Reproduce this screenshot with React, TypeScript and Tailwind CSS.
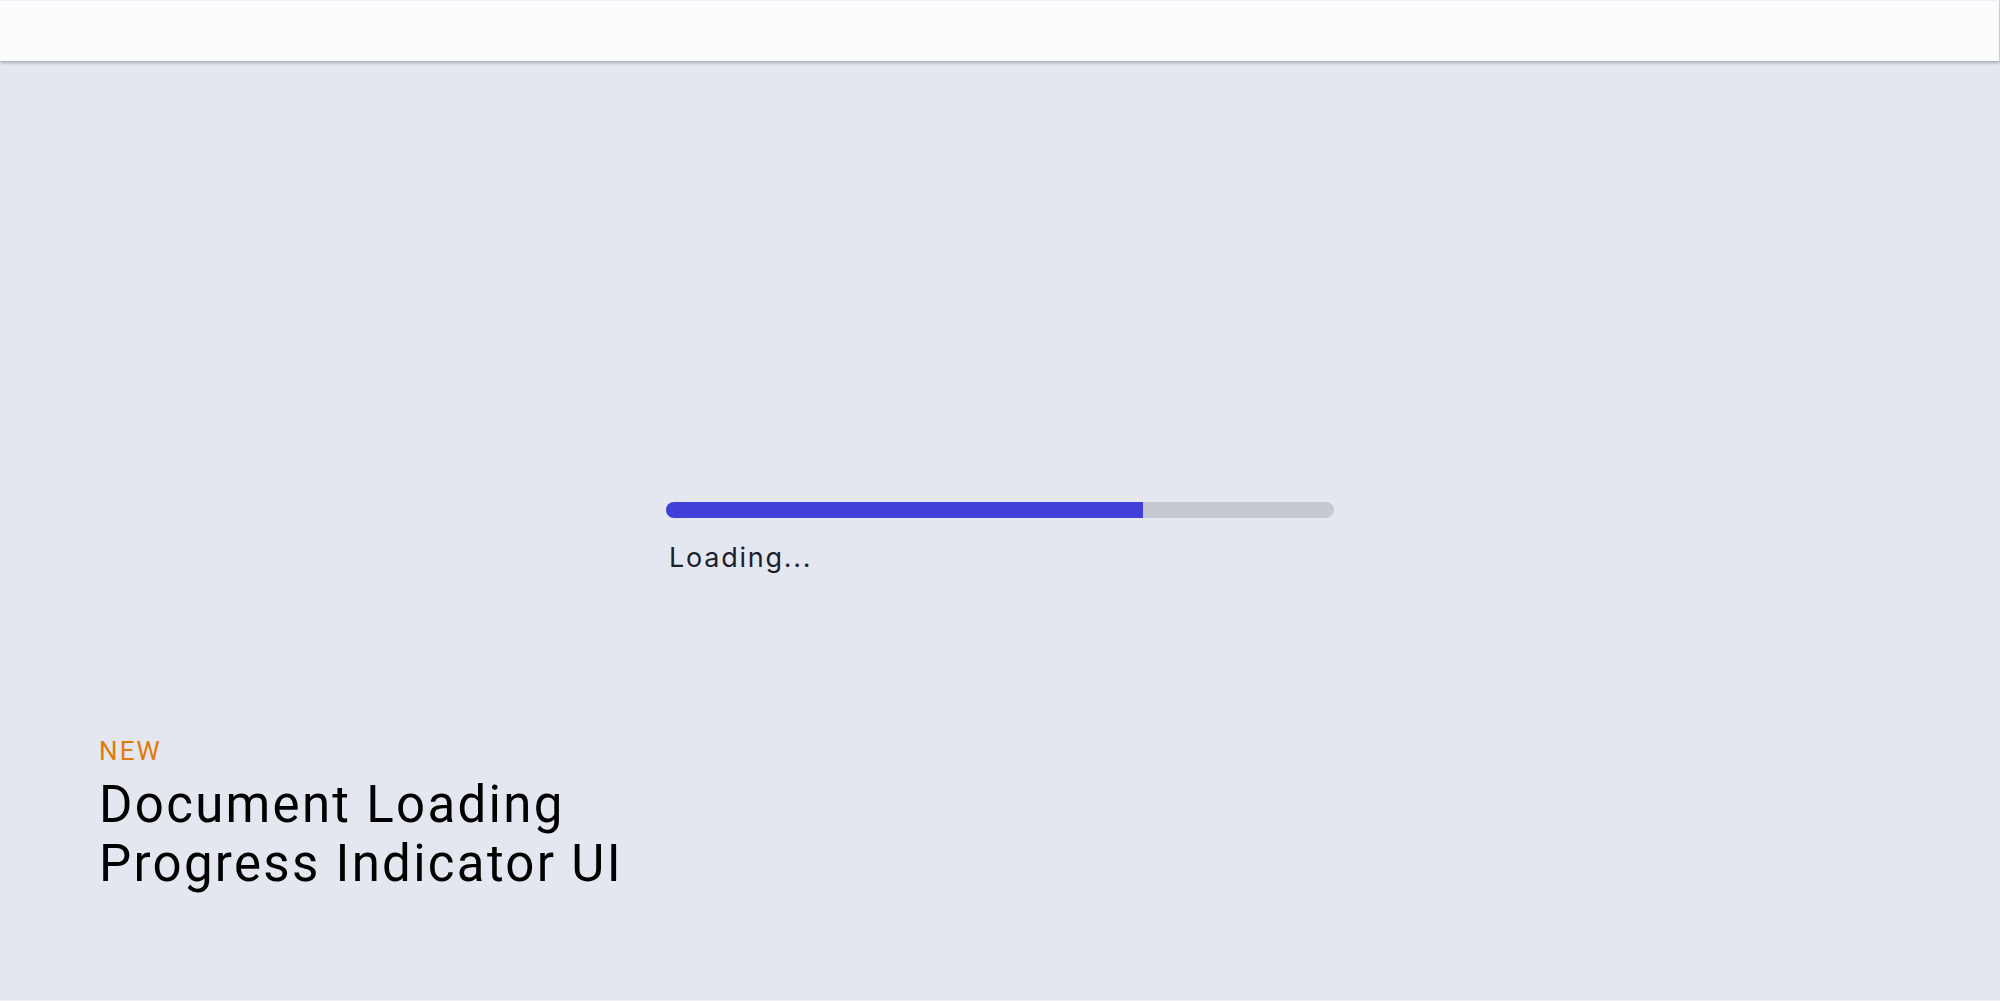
import React from "react";

export default function App() {
  const progress = 71.4;
  return (
    <div className="flex h-[1001px] w-full flex-col overflow-hidden bg-[#e4e7ef]">
      <header className="relative z-10 h-[61px] w-full shrink-0 border-t border-r border-t-[#eef0f3] border-r-[#c9cbd0] bg-[#fbfcfe] shadow-[0_2px_3px_rgba(60,64,80,0.35)]" />
      <main className="flex flex-1 flex-col border-b border-b-[#eef0f4]">
        <div className="flex justify-center pt-[441px]">
          <div className="w-[668px]">
            <div className="flex h-[16px] w-full overflow-hidden rounded-full bg-[#c6c9d1]">
              <div className="h-full bg-[#4040d8]" style={{ width: `${progress}%` }} />
            </div>
            <p className="mt-[22px] pl-[3px] font-['Inter',sans-serif] text-[27px] leading-[36px] tracking-[0.065em] text-[#1a1f2e]">
              Loading...
            </p>
          </div>
        </div>
        <div className="flex-1" />
        <div className="pb-[107px] pl-[99px] font-['Roboto',sans-serif]">
          <p className="text-[26px] leading-[32px] tracking-[0.08em] text-[#e07b0a]">NEW</p>
          <h1 className="mt-[8px] text-[51px] font-normal leading-[59px] tracking-[0.045em] text-black">
            Document Loading
            <br />
            Progress Indicator UI
          </h1>
        </div>
      </main>
    </div>
  );
}
